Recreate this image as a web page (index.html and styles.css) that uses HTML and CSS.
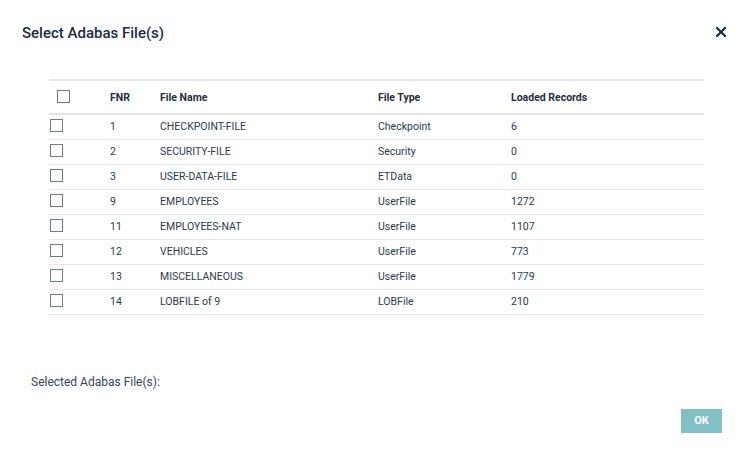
FILE: index.html
```html
<!DOCTYPE html>
<html>
<head>
  <meta charset="UTF-8">
  <title>Select Adabas File(s)</title>
  <link rel="stylesheet" href="styles.css">
</head>
<body>

<div class="dialog">
  <div class="dialogHeader">
    <h2>Select Adabas File(s)</h2>
    <span class="closeBtn">
      <svg width="10" height="10" viewBox="0 0 10 10"><path d="M1 1 L9 9 M9 1 L1 9" stroke="#1b2a44" stroke-width="2.2" stroke-linecap="square"/></svg>
    </span>
  </div>

  <table class="fileTable">
    <thead>
      <tr>
        <th class="colCheck"><span class="checkbox headCheck"></span></th>
        <th class="colFnr">FNR</th>
        <th class="colName">File Name</th>
        <th class="colType">File Type</th>
        <th>Loaded Records</th>
      </tr>
    </thead>
    <tbody>
      <tr><td><span class="checkbox"></span></td><td>1</td><td>CHECKPOINT-FILE</td><td>Checkpoint</td><td>6</td></tr>
      <tr><td><span class="checkbox"></span></td><td>2</td><td>SECURITY-FILE</td><td>Security</td><td>0</td></tr>
      <tr><td><span class="checkbox"></span></td><td>3</td><td>USER-DATA-FILE</td><td>ETData</td><td>0</td></tr>
      <tr><td><span class="checkbox"></span></td><td>9</td><td>EMPLOYEES</td><td>UserFile</td><td>1272</td></tr>
      <tr><td><span class="checkbox"></span></td><td>11</td><td>EMPLOYEES-NAT</td><td>UserFile</td><td>1107</td></tr>
      <tr><td><span class="checkbox"></span></td><td>12</td><td>VEHICLES</td><td>UserFile</td><td>773</td></tr>
      <tr><td><span class="checkbox"></span></td><td>13</td><td>MISCELLANEOUS</td><td>UserFile</td><td>1779</td></tr>
      <tr><td><span class="checkbox"></span></td><td>14</td><td>LOBFILE of 9</td><td>LOBFile</td><td>210</td></tr>
    </tbody>
  </table>

  <div class="selectedLabel">Selected Adabas File(s):</div>

  <div class="dialogFooter">
    <button class="okBtn">OK</button>
  </div>
</div>

</body>
</html>
```

FILE: styles.css
```css
body {
  margin: 0;
  background: #fff;
  color: #2c3a4d;
  font-family: Roboto, "Liberation Sans", sans-serif;
}

.dialog {
  width: 752px;
  height: 474px;
}

.dialogHeader {
  display: flex;
  align-items: center;
  justify-content: space-between;
  padding: 23px 26px 0 22px;
  height: 20px;
}

.dialogHeader h2 {
  margin: 0;
  font-size: 15px;
  font-weight: 500;
  color: #1b2a44;
  line-height: 20px;
}

.closeBtn {
  display: flex;
  margin-top: -2px;
}

.fileTable {
  margin: 36px 0 0 49px;
  width: 655px;
  border-collapse: collapse;
  font-size: 10.5px;
  table-layout: fixed;
}

.fileTable th, .fileTable td {
  padding: 0;
  text-align: left;
  white-space: nowrap;
}

.fileTable thead tr {
  height: 34px;
  border-top: 2px solid #e6e9ee;
  border-bottom: 2px solid #e1e5ea;
}

.fileTable th {
  font-weight: 700;
  color: #1f2d40;
}

.fileTable tbody tr {
  height: 25px;
  border-bottom: 1px solid #e4e7ec;
}

.fileTable td {
  color: #2c3a4d;
}

.colCheck { width: 61px; }
.colFnr { width: 50px; }
.colName { width: 218px; }
.colType { width: 133px; }

.checkbox {
  display: block;
  width: 11px;
  height: 11px;
  border: 1px solid #6d7a8b;
  margin-left: 1px;
  margin-top: -2px;
  background: #fff;
}

.headCheck {
  margin-left: 8px;
  margin-top: -1px;
}

.selectedLabel {
  margin: 60px 0 0 31px;
  font-size: 12px;
  color: #34445a;
}

.dialogFooter {
  display: flex;
  justify-content: flex-end;
  padding: 20px 30px 0 0;
}

.okBtn {
  width: 41px;
  height: 24px;
  border: none;
  background: #82c0c7;
  color: #fff;
  font-family: Roboto, "Liberation Sans", sans-serif;
  font-size: 11px;
  font-weight: 700;
  padding: 0;
}
```
